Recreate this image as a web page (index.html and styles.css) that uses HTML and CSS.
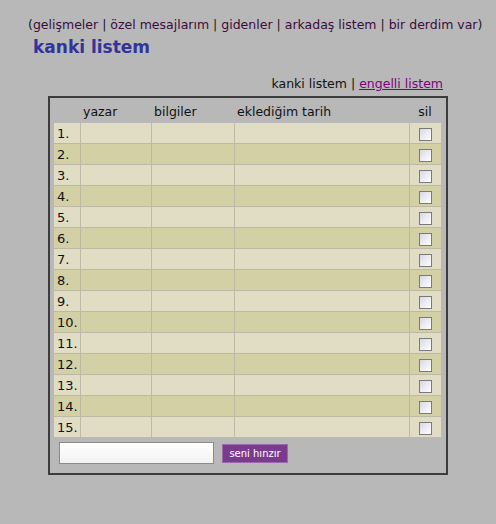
FILE: index.html
```html
<!DOCTYPE html>
<html>
<head>
<meta charset="utf-8">
<link rel="stylesheet" href="styles.css">
</head>
<body>
<div class="page">
  <div class="nav">(<a>gelişmeler</a> | <a>özel mesajlarım</a> | <a>gidenler</a> | <a>arkadaş listem</a> | <a>bir derdim var</a>)</div>
  <h1 class="title">kanki listem</h1>
  <div class="tabs">kanki listem | <a class="ul">engelli listem</a></div>
  <div class="box">
    <table class="list">
      <colgroup><col class="c1"><col class="c2"><col class="c3"><col class="c4"><col class="c5"></colgroup>
      <thead>
        <tr><th></th><th>yazar</th><th>bilgiler</th><th>eklediğim tarih</th><th class="sil">sil</th></tr>
      </thead>
      <tbody id="rows"></tbody>
    </table>
    <div class="form">
      <input class="field" type="text">
      <button class="btn">seni hınzır</button>
    </div>
  </div>
</div>
<script>
var tb=document.getElementById('rows');var h='';
for(var i=1;i<=15;i++){h+='<tr class="'+(i%2?'odd':'even')+'"><td class="num">'+i+'.</td><td></td><td></td><td></td><td class="chk"><span class="cb"></span></td></tr>';}
tb.innerHTML=h;
</script>
</body>
</html>
```
FILE: styles.css
```css
html,body{margin:0;padding:0;background:#b8b8b8;}
body{font-family:"DejaVu Sans",Verdana,sans-serif;color:#1a1a1a;}
.page{width:496px;height:524px;position:relative;}
.nav{font-size:12.5px;padding-top:17px;padding-left:28px;line-height:16px;color:#1a1a1a;white-space:nowrap;}
.nav a{color:#3c0c3c;}
.title{margin:4px 0 0 33px;font-size:17px;line-height:20px;font-weight:bold;color:#333399;}
.tabs{font-size:12.5px;line-height:16px;text-align:right;width:443px;margin-top:19px;color:#111;}
.tabs .ul{color:#800080;text-decoration:underline;}
.box{margin:4px 0 0 48px;width:389px;height:372px;border:2px solid #3c3c3c;padding:3px 3px 0 4px;}
.list{border-collapse:collapse;width:387px;table-layout:fixed;font-size:12.5px;}
.c1{width:26px}.c2{width:71px}.c3{width:83px}.c4{width:175px}.c5{width:32px}
.list th{font-weight:normal;text-align:left;height:22px;padding:0 0 0 3px;color:#111;line-height:14px;}
.list th.sil{text-align:center;padding:0;}
.list td{height:20px;padding:0;border:1px solid #bdb9a4;border-top:0;}
.list tr td:first-child{border-left:0;}
.list tr td:last-child{border-right:0;}
.list tr.odd td{background:#e0ddc4;}
.list tr.even td{background:#d3d0a6;}
.list tbody tr:last-child td{border-bottom:0;}
.num{padding-left:3px!important;font-size:13px;color:#111;}
.chk{text-align:center;}
.cb{display:inline-block;width:11px;height:11px;border:1px solid #7a7a7a;background:linear-gradient(135deg,#d8d8e4,#fff);vertical-align:middle;}
.form{display:flex;align-items:center;margin-top:5px;padding-left:5px;}
.field{width:153px;height:20px;border:1px solid #8a8a8a;box-sizing:content-box;padding:0;background:linear-gradient(#fff,#f2f2f2);margin:0;}
.btn{margin-left:8px;height:19px;width:66px;padding:0;border:1px solid #9a6aaa;background:#7a3a8e;color:#fff;font-family:"DejaVu Sans",sans-serif;font-size:10px;line-height:15px;}
```
